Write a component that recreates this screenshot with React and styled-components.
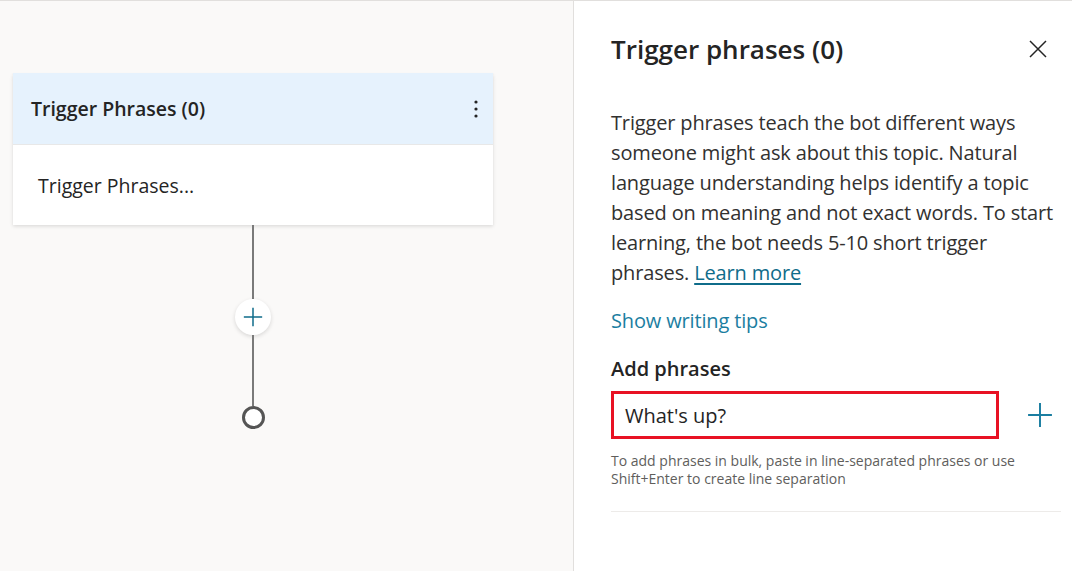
import React from 'react';
import styled, { createGlobalStyle } from 'styled-components';

const GlobalStyle = createGlobalStyle`
  html, body {
    margin: 0;
    padding: 0;
    background: #ffffff;
  }
  body {
    font-family: 'Open Sans', 'Noto Sans', sans-serif;
    color: #242424;
  }
`;

const Page = styled.div`
  display: flex;
  width: 1072px;
  height: 571px;
  border-top: 1px solid #e1dfdd;
  box-sizing: border-box;
  overflow: hidden;
`;

const Canvas = styled.div`
  width: 574px;
  flex-shrink: 0;
  background: #faf9f8;
  border-right: 1px solid #e1dfdd;
  padding: 72px 0 0 13px;
  box-sizing: border-box;
`;

const Flow = styled.div`
  width: 480px;
  display: flex;
  flex-direction: column;
  align-items: center;
`;

const Card = styled.div`
  width: 480px;
  background: #fff;
  box-shadow: 0 1.6px 3.6px rgba(0, 0, 0, 0.13), 0 0.3px 0.9px rgba(0, 0, 0, 0.11);
`;

const CardHeader = styled.div`
  height: 72px;
  background: #e6f2fd;
  border-bottom: 1px solid #e8e8e8;
  box-sizing: border-box;
  display: flex;
  align-items: center;
  justify-content: space-between;
  padding: 0 14px 0 18px;
`;

const CardTitle = styled.div`
  font-size: 19.5px;
  font-weight: 600;
  color: #242424;
`;

const CardBody = styled.div`
  height: 80px;
  display: flex;
  align-items: center;
  padding-left: 25px;
  font-size: 19.5px;
  color: #242424;
`;

const Line = styled.div`
  width: 2px;
  height: ${(p) => p.h}px;
  background: #7a7a7a;
`;

const AddNode = styled.div`
  width: 36px;
  height: 36px;
  border-radius: 50%;
  background: #fff;
  box-shadow: 0 1.6px 4px rgba(0, 0, 0, 0.14);
  display: flex;
  align-items: center;
  justify-content: center;
`;

const EndNode = styled.div`
  width: 17px;
  height: 17px;
  border-radius: 50%;
  border: 3px solid #555;
  background: #fff;
`;

const Panel = styled.div`
  flex: 1;
  background: #fff;
  padding: 17px 11px 0 37px;
  display: flex;
  flex-direction: column;
`;

const PanelHead = styled.div`
  display: flex;
  align-items: center;
  justify-content: space-between;
  height: 62px;
`;

const PanelTitle = styled.h1`
  margin: 0;
  font-size: 26px;
  font-weight: 600;
  color: #242424;
`;

const CloseBtn = styled.button`
  border: none;
  background: none;
  padding: 0;
  width: 24px;
  height: 24px;
  margin-right: 11px;
  display: flex;
  align-items: center;
  justify-content: center;
`;

const Description = styled.p`
  margin: 28px 0 0;
  font-size: 20px;
  line-height: 30px;
  letter-spacing: -0.15px;
  color: #323130;
  width: 450px;
`;

const Link = styled.a`
  color: #0f6c8a;
  text-decoration: underline;
  text-underline-offset: 3px;
`;

const TipsLink = styled.div`
  margin-top: 18px;
  font-size: 20px;
  line-height: 30px;
  letter-spacing: -0.15px;
  color: #1b7ea1;
`;

const Label = styled.div`
  margin-top: 18px;
  font-size: 20px;
  font-weight: 600;
  line-height: 30px;
  color: #242424;
`;

const InputRow = styled.div`
  margin-top: 7px;
  display: flex;
  align-items: center;
  gap: 28px;
`;

const PhraseInput = styled.div`
  width: 388px;
  height: 48px;
  box-sizing: border-box;
  border: 3px solid #e81123;
  display: flex;
  align-items: center;
  padding-left: 11px;
  font-size: 20px;
  color: #242424;
`;

const Hint = styled.div`
  margin-top: 13px;
  font-size: 14px;
  line-height: 18px;
  color: #605e5c;
  width: 450px;
`;

const Divider = styled.div`
  margin-top: 23px;
  width: 450px;
  height: 1px;
  background: #edebe9;
`;

function PlusIcon({ size, color, stroke }) {
  return (
    <svg width={size} height={size} viewBox="0 0 24 24">
      <path d="M12 1v22M1 12h22" stroke={color} strokeWidth={stroke} fill="none" />
    </svg>
  );
}

export default function App() {
  return (
    <>
      <GlobalStyle />
      <Page>
        <Canvas>
          <Flow>
            <Card>
              <CardHeader>
                <CardTitle>Trigger Phrases (0)</CardTitle>
                <svg width="6" height="20" viewBox="0 0 6 20">
                  <circle cx="3" cy="3" r="1.6" fill="#242424" />
                  <circle cx="3" cy="10" r="1.6" fill="#242424" />
                  <circle cx="3" cy="17" r="1.6" fill="#242424" />
                </svg>
              </CardHeader>
              <CardBody>Trigger Phrases...</CardBody>
            </Card>
            <Line h={74} />
            <AddNode>
              <PlusIcon size={20} color="#0f6c8a" stroke={1.8} />
            </AddNode>
            <Line h={71} />
            <EndNode />
          </Flow>
        </Canvas>
        <Panel>
          <PanelHead>
            <PanelTitle>Trigger phrases (0)</PanelTitle>
            <CloseBtn>
              <svg width="18" height="18" viewBox="0 0 18 18">
                <path d="M1 1l16 16M17 1L1 17" stroke="#242424" strokeWidth="1.5" />
              </svg>
            </CloseBtn>
          </PanelHead>
          <Description>
            Trigger phrases teach the bot different ways someone might ask about this topic.
            Natural language understanding helps identify a topic based on meaning and not exact
            words. To start learning, the bot needs 5-10 short trigger phrases.{' '}
            <Link href="#">Learn more</Link>
          </Description>
          <TipsLink>Show writing tips</TipsLink>
          <Label>Add phrases</Label>
          <InputRow>
            <PhraseInput>What's up?</PhraseInput>
            <PlusIcon size={26} color="#1b7ea1" stroke={1.8} />
          </InputRow>
          <Hint>
            To add phrases in bulk, paste in line-separated phrases or use Shift+Enter to create
            line separation
          </Hint>
          <Divider />
        </Panel>
      </Page>
    </>
  );
}
